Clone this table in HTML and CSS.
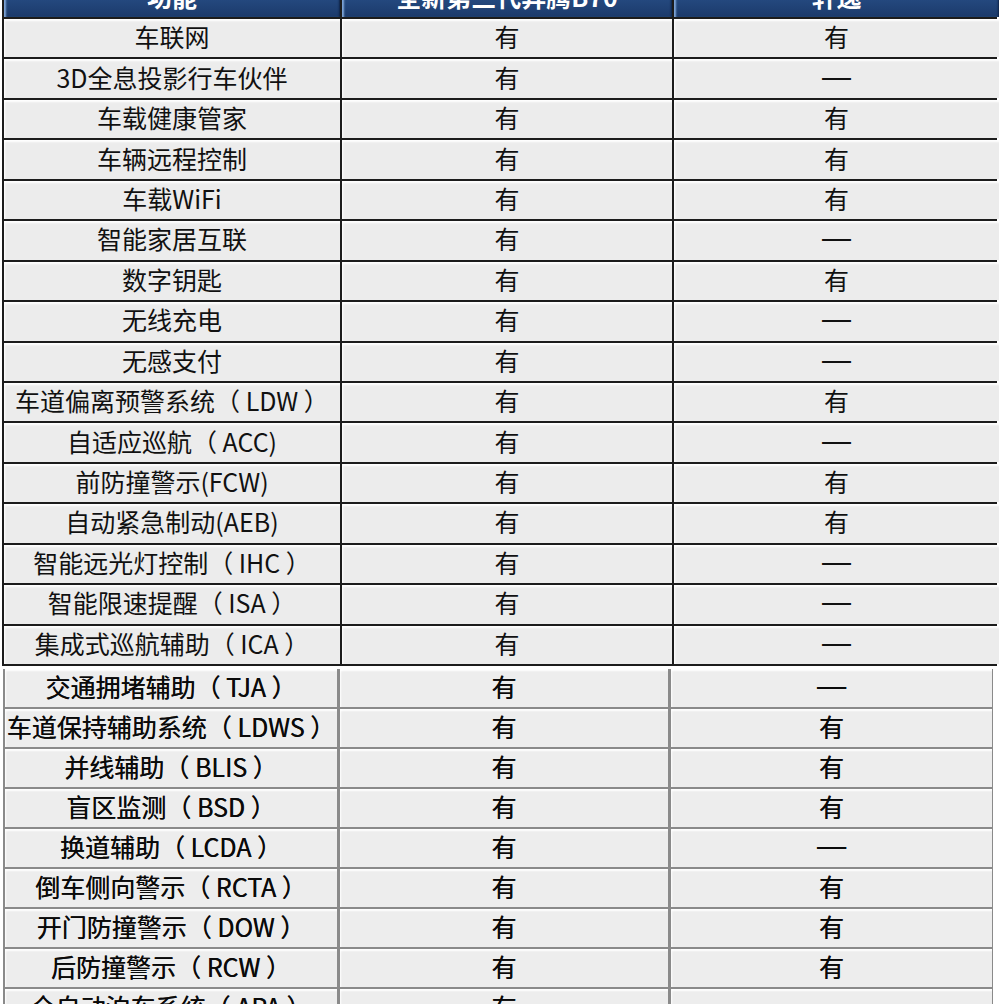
FILE: index.html
```html
<!DOCTYPE html>
<html lang="zh-CN">
<head>
<meta charset="utf-8">
<title>功能对比</title>
<link rel="stylesheet" href="styles.css">
</head>
<body>
<div class="page">
  <div class="table table-top">
    <div class="hcell">功能</div>
    <div class="hcell">全新第三代奔腾B70</div>
    <div class="hcell">轩逸</div>

    <div class="cell">车联网</div><div class="cell">有</div><div class="cell">有</div>
    <div class="cell">3D全息投影行车伙伴</div><div class="cell">有</div><div class="cell"><span class="none">—</span></div>
    <div class="cell">车载健康管家</div><div class="cell">有</div><div class="cell">有</div>
    <div class="cell">车辆远程控制</div><div class="cell">有</div><div class="cell">有</div>
    <div class="cell">车载WiFi</div><div class="cell">有</div><div class="cell">有</div>
    <div class="cell">智能家居互联</div><div class="cell">有</div><div class="cell"><span class="none">—</span></div>
    <div class="cell">数字钥匙</div><div class="cell">有</div><div class="cell">有</div>
    <div class="cell">无线充电</div><div class="cell">有</div><div class="cell"><span class="none">—</span></div>
    <div class="cell">无感支付</div><div class="cell">有</div><div class="cell"><span class="none">—</span></div>
    <div class="cell">车道偏离预警系统（ LDW ）</div><div class="cell">有</div><div class="cell">有</div>
    <div class="cell">自适应巡航（ ACC)</div><div class="cell">有</div><div class="cell"><span class="none">—</span></div>
    <div class="cell">前防撞警示(FCW)</div><div class="cell">有</div><div class="cell">有</div>
    <div class="cell">自动紧急制动(AEB)</div><div class="cell">有</div><div class="cell">有</div>
    <div class="cell">智能远光灯控制（ IHC ）</div><div class="cell">有</div><div class="cell"><span class="none">—</span></div>
    <div class="cell">智能限速提醒（ ISA ）</div><div class="cell">有</div><div class="cell"><span class="none">—</span></div>
    <div class="cell">集成式巡航辅助（ ICA ）</div><div class="cell">有</div><div class="cell"><span class="none">—</span></div>
  </div>

  <div class="table table-bottom">
    <div class="cell">交通拥堵辅助（ TJA ）</div><div class="cell">有</div><div class="cell"><span class="none">—</span></div>
    <div class="cell">车道保持辅助系统（ LDWS ）</div><div class="cell">有</div><div class="cell">有</div>
    <div class="cell">并线辅助（ BLIS ）</div><div class="cell">有</div><div class="cell">有</div>
    <div class="cell">盲区监测（ BSD ）</div><div class="cell">有</div><div class="cell">有</div>
    <div class="cell">换道辅助（ LCDA ）</div><div class="cell">有</div><div class="cell"><span class="none">—</span></div>
    <div class="cell">倒车侧向警示（ RCTA ）</div><div class="cell">有</div><div class="cell">有</div>
    <div class="cell">开门防撞警示（ DOW ）</div><div class="cell">有</div><div class="cell">有</div>
    <div class="cell">后防撞警示（ RCW ）</div><div class="cell">有</div><div class="cell">有</div>
    <div class="cell">全自动泊车系统（ APA ）</div><div class="cell">有</div><div class="cell"><span class="none">—</span></div>
  </div>
</div>
</body>
</html>
```

FILE: styles.css
```css
html, body {
  margin: 0;
  padding: 0;
  background: #ffffff;
}

.page {
  width: 1000px;
  height: 1004px;
  overflow: hidden;
  font-family: "Noto Sans CJK SC", "Noto Sans", sans-serif;
}

.table {
  display: grid;
  gap: 2px;
}

.table-top {
  margin: -23px 0 0 2px;
  width: 995px;
  grid-template-columns: 336px 330px 325px;
  grid-template-rows: 40px;
  grid-auto-rows: 38.44px;
  background: #1c1c1c;
  padding: 0 2px 2px 2px;
  box-sizing: border-box;
}

.table-bottom {
  margin: 3px 0 0 3px;
  width: 990px;
  grid-template-columns: 332px 328px 321px;
  grid-auto-rows: 38px;
  background: #8a8a8a;
  padding: 0 2px 2px 2px;
  box-sizing: border-box;
  column-gap: 3px;
}

.hcell {
  display: flex;
  align-items: center;
  justify-content: center;
  background: linear-gradient(to bottom, #2f5794 0%, #24497f 55%, #1b3a6b 100%);
  box-shadow: inset 3px 0 2px -1px #7fa6d8, inset -2px 0 2px -1px #0e2246;
  color: #ffffff;
  font-size: 25px;
  font-weight: 700;
  line-height: 1;
  padding-bottom: 2px;
  box-sizing: border-box;
}

.cell {
  display: flex;
  align-items: center;
  justify-content: center;
  background: #ececec;
  box-shadow: inset 2px 3px 2px -1px #ffffff;
  color: #111111;
  font-size: 25px;
  line-height: 1;
  white-space: nowrap;
  padding-bottom: 3px;
  box-sizing: border-box;
}

.none {
  font-family: "Liberation Sans", sans-serif;
  font-size: 29px;
  line-height: 1;
}

.table-bottom .cell {
  color: #0a0a0a;
  background: #ededed;
  text-shadow: 0.3px 0 0 #222;
}
```
